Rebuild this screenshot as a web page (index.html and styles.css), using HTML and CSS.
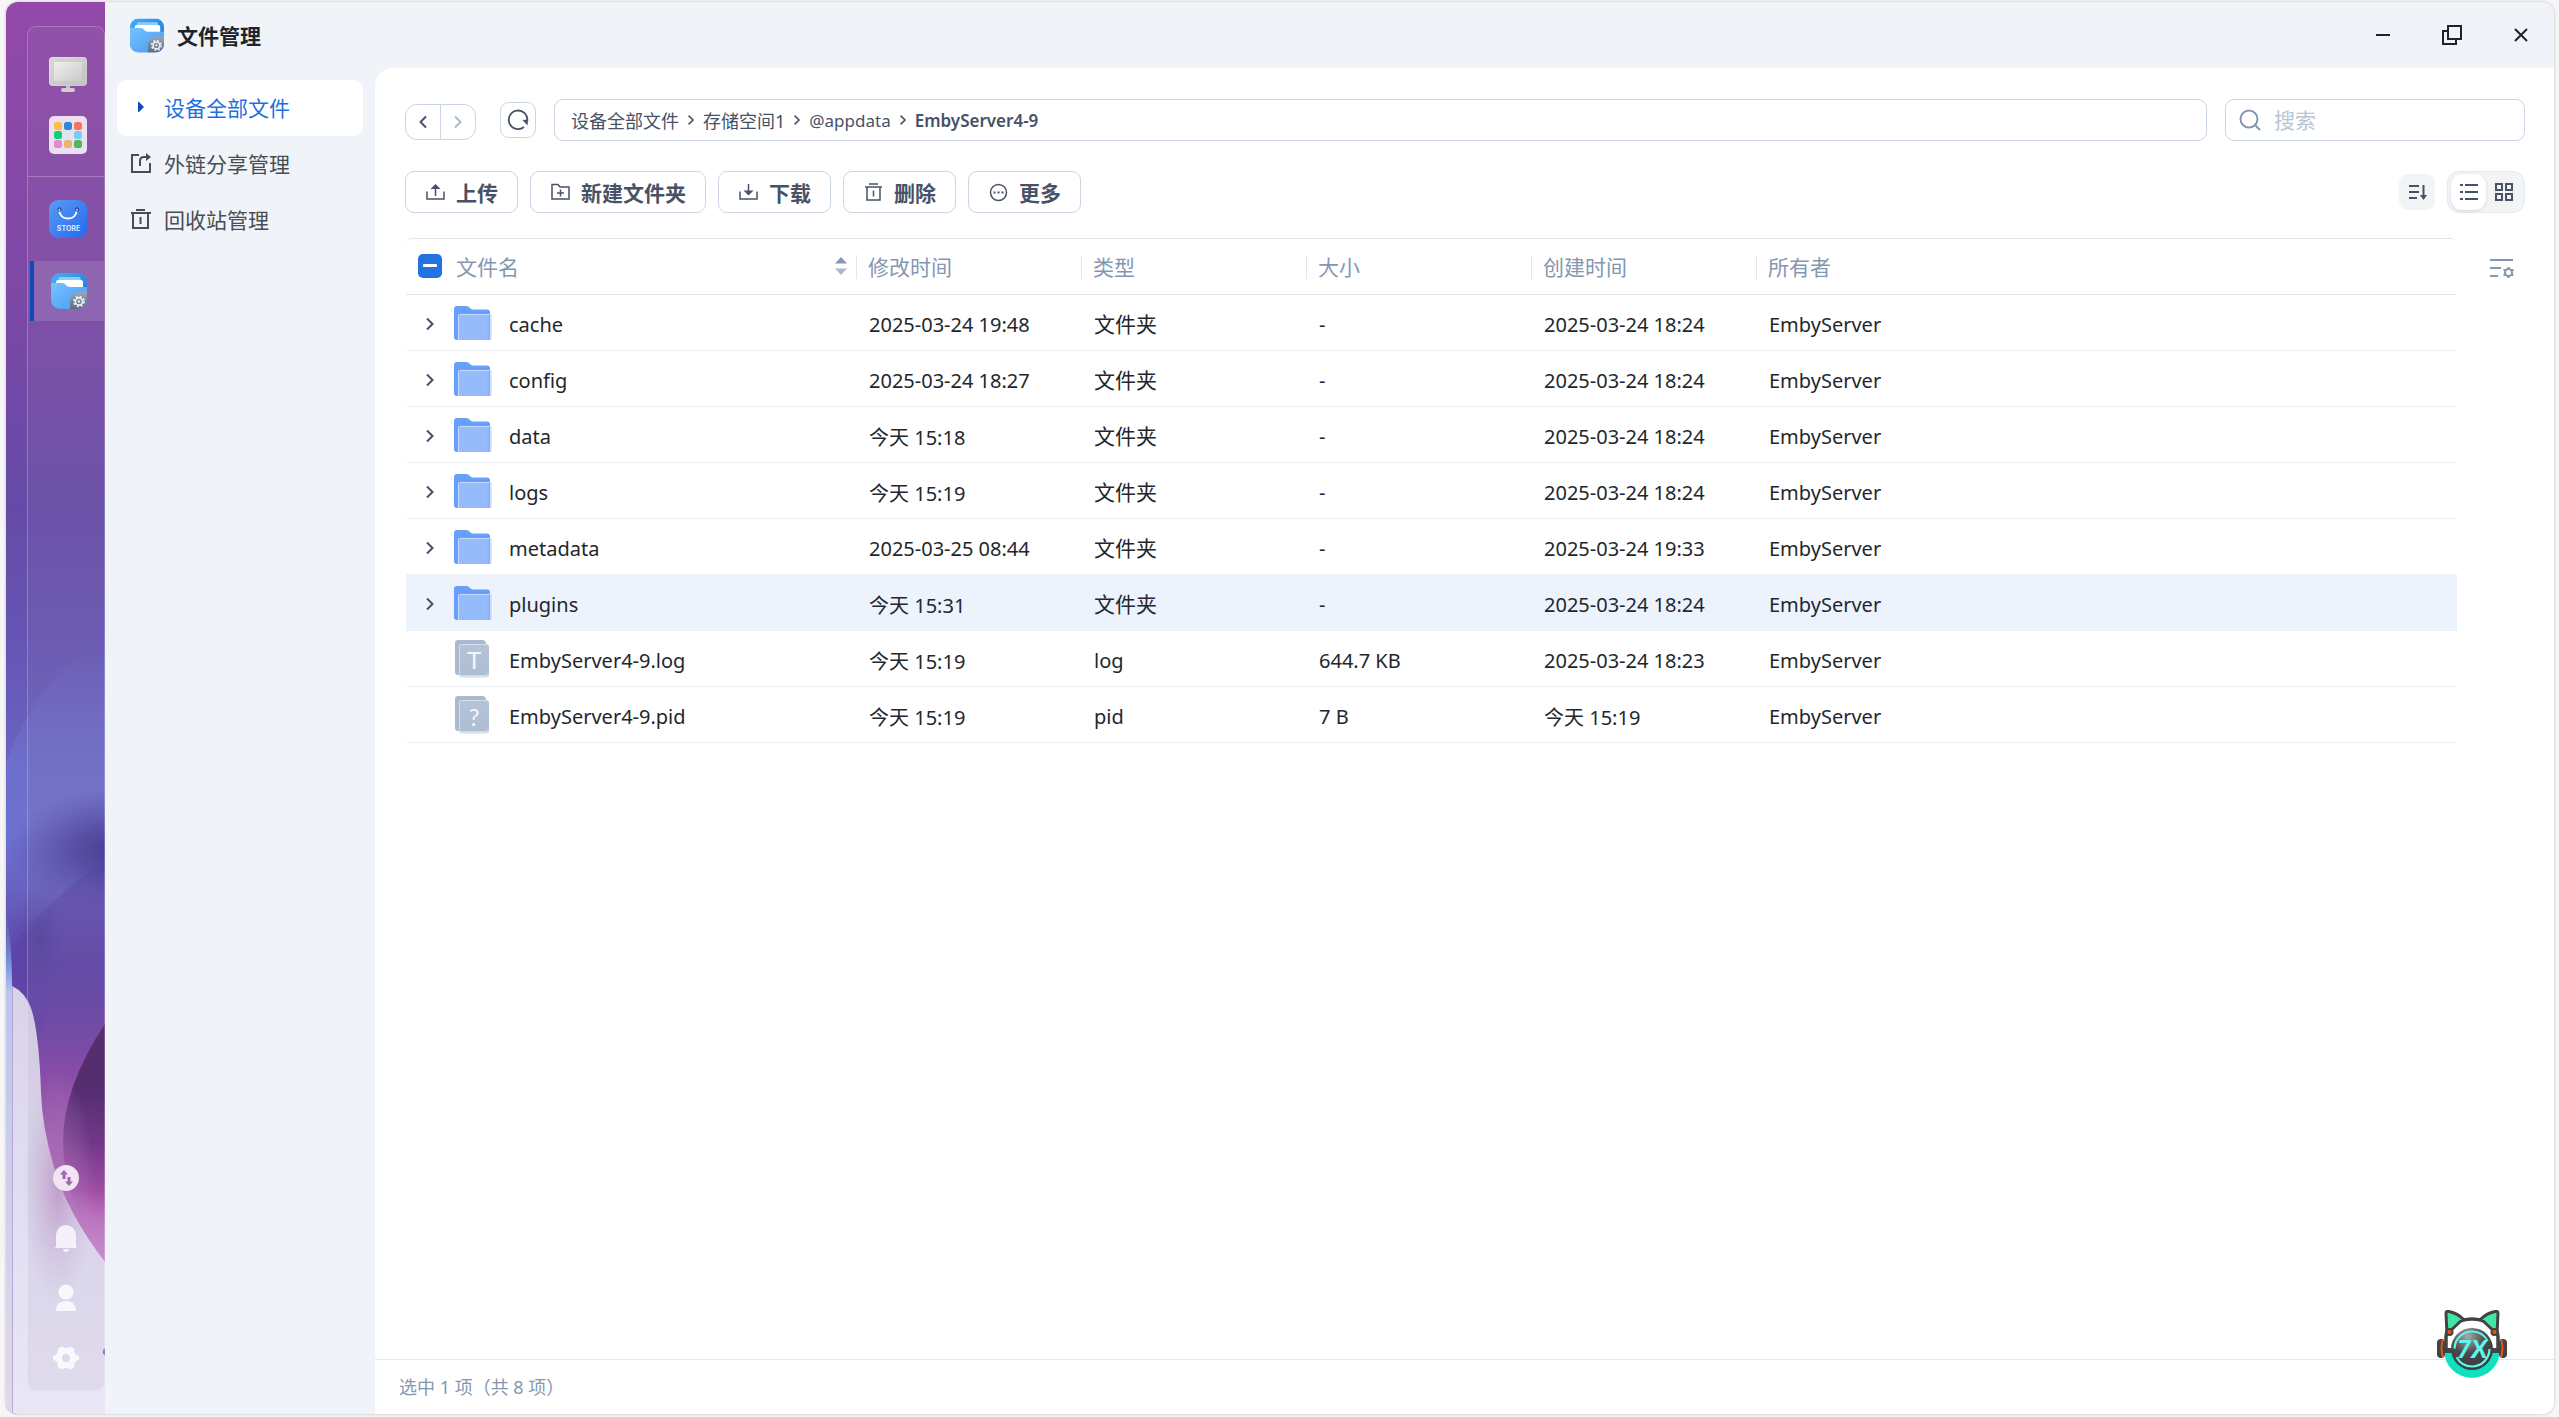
FILE: index.html
```html
<!DOCTYPE html>
<html lang="zh-CN">
<head>
<meta charset="utf-8">
<title>文件管理</title>
<link rel="stylesheet" href="styles.css">
</head>
<body>
<svg class="defs" aria-hidden="true">
  <defs>
    <linearGradient id="appBack" x1="0" y1="0" x2="1" y2="1"><stop offset="0" stop-color="#45b0fb"/><stop offset="1" stop-color="#1c6fd0"/></linearGradient>
    <linearGradient id="appFront" x1="0" y1="0" x2="1" y2="1"><stop offset="0" stop-color="#74c3ff"/><stop offset="1" stop-color="#4a98f2"/></linearGradient>
    <linearGradient id="appCorner" x1="0" y1="0" x2="0" y2="1"><stop offset="0" stop-color="#9aa5b8"/><stop offset="1" stop-color="#5d6b80"/></linearGradient>
    <linearGradient id="folderFront" x1="0" y1="0" x2="1" y2="0"><stop offset="0" stop-color="#96bbfb"/><stop offset=".84" stop-color="#96bbfb"/><stop offset="1" stop-color="#96bbfb" stop-opacity=".25"/></linearGradient>
    <linearGradient id="docFade" x1="0" y1="0" x2="0" y2="1"><stop offset="0" stop-color="#b4c3d7"/><stop offset=".84" stop-color="#afbed2"/><stop offset="1" stop-color="#afbed2" stop-opacity=".2"/></linearGradient>
    <clipPath id="appClip"><rect width="36" height="36" rx="9"/></clipPath>
  </defs>
  <symbol id="i-app" viewBox="0 0 36 36">
    <g clip-path="url(#appClip)">
      <rect width="36" height="36" fill="url(#appBack)"/>
      <path d="M8 4h21l2 8H6z" fill="#8accfb"/>
      <path d="M5 9q0-2 2-2h23q2 0 2 2v10H5z" fill="#fff"/>
      <path d="M0 10h11q2 0 3 1l2 2q1 1 3 1h17v22H0z" fill="url(#appFront)"/>
      <path d="M36 19v17H19V29q0-10 10-10z" fill="url(#appCorner)"/>
    </g>
    <circle cx="28" cy="28.500" r="3.600" fill="none" stroke="#eef1f5" stroke-width="1.600"/>
    <circle cx="28" cy="28.500" r="5" fill="none" stroke="#eef1f5" stroke-width="1.800" stroke-dasharray="2 1.930"/>
    <circle cx="28" cy="28.500" r="1.200" fill="#eef1f5"/>
  </symbol>
  <symbol id="i-folder" viewBox="0 0 38 34">
    <path d="M0 3q0-3 3-3h9q1.500 0 2.500.8L18 3.500h15q3 0 3 3V34H3q-3 0-3-3z" fill="#67a0fa"/>
    <rect x="4" y="8" width="34" height="26" rx="1.500" fill="url(#folderFront)"/>
    <path d="M4.500 34V9.500q0-1 1-1H36" fill="none" stroke="#c4daff"/>
  </symbol>
  <symbol id="i-doc" viewBox="0 0 38 40">
    <path d="M1 4q0-3 3-3h24q4 0 4 4v31H4q-3 0-3-3z" fill="#a9bad0"/>
    <rect x="5" y="5" width="30" height="34" rx="3" fill="url(#docFade)"/>
    <path d="M5.500 36V7q0-1.500 1.500-1.500h25.500q2 0 2 2" fill="none" stroke="#d3dde9"/>
  </symbol>
  <symbol id="i-chev" viewBox="0 0 10 14"><path d="M2 1.500 7.500 7 2 12.500" fill="none" stroke="currentColor" stroke-width="2"/></symbol>
</svg>

<div class="desktop">
  <aside class="wall">
    <svg class="paper" viewBox="0 0 99 1412" preserveAspectRatio="none" aria-hidden="true">
      <defs>
        <linearGradient id="sky" x1="0" y1="0" x2="0" y2="1">
          <stop offset="0" stop-color="#9349a9"/><stop offset=".21" stop-color="#7c48a6"/><stop offset=".36" stop-color="#654ba8"/><stop offset=".46" stop-color="#6656b4"/><stop offset=".55" stop-color="#6b66c4"/><stop offset=".6" stop-color="#6258b8"/><stop offset=".68" stop-color="#5e44a6"/><stop offset="1" stop-color="#7c3b9c"/>
        </linearGradient>
        <linearGradient id="glow" x1="0" y1="0" x2="0" y2="1"><stop offset="0" stop-color="#6e72ce" stop-opacity="0"/><stop offset=".6" stop-color="#6e72ce"/><stop offset="1" stop-color="#6e72ce" stop-opacity="0"/></linearGradient>
        <radialGradient id="dusk"><stop offset="0" stop-color="#3a3088"/><stop offset=".4" stop-color="#463a98" stop-opacity=".75"/><stop offset="1" stop-color="#5448a8" stop-opacity="0"/></radialGradient>
        <linearGradient id="petal" gradientUnits="userSpaceOnUse" x1="0" y1="980" x2="0" y2="1262"><stop offset="0" stop-color="#6a3fa4" stop-opacity="0"/><stop offset=".35" stop-color="#8b46a8"/><stop offset=".75" stop-color="#b464b8"/><stop offset="1" stop-color="#cf8fd3"/></linearGradient>
        <linearGradient id="deep" gradientUnits="userSpaceOnUse" x1="99" y1="1090" x2="74" y2="1220"><stop offset="0" stop-color="#4c2168"/><stop offset=".4" stop-color="#6e2c86"/><stop offset=".75" stop-color="#a046a4"/><stop offset="1" stop-color="#c06abf" stop-opacity="0"/></linearGradient>
        <linearGradient id="mist" x1="0" y1="0" x2="0" y2="1"><stop offset="0" stop-color="#d9d3ea"/><stop offset=".6" stop-color="#e3e0f3"/><stop offset="1" stop-color="#e9e7f5"/></linearGradient>
        <linearGradient id="edge" x1="0" y1="0" x2="0" y2="1"><stop offset="0" stop-color="#6a86d6" stop-opacity="0"/><stop offset=".11" stop-color="#7c9ce2"/><stop offset=".16" stop-color="#b9c6ef"/><stop offset=".6" stop-color="#d3d0ea"/><stop offset="1" stop-color="#e2d9e8"/></linearGradient>
        <radialGradient id="blush"><stop offset="0" stop-color="#b068b4" stop-opacity=".75"/><stop offset="1" stop-color="#b9a0cc" stop-opacity="0"/></radialGradient>
      </defs>
      <rect width="99" height="1412" fill="url(#sky)"/>
      <path d="M0 760Q40 660 99 640V860Q50 890 0 950z" fill="url(#glow)"/>
      <ellipse cx="112" cy="848" rx="110" ry="62" fill="url(#dusk)"/>
      <ellipse cx="34" cy="938" rx="30" ry="60" fill="url(#dusk)" opacity=".35"/>
      <path d="M99 900Q45 980 32 1040V1262H99z" fill="url(#petal)"/>
      <path d="M99 1022Q57 1085 57 1140T99 1262z" fill="url(#deep)"/>
      <path d="M6 984Q19 990 25 1006 33 1030 35 1090 36 1125 48 1165 62 1212 99 1260V1412H0V984z" fill="url(#mist)"/>
      <ellipse cx="52" cy="1185" rx="36" ry="115" fill="url(#blush)" opacity=".7"/>
      <path d="M0 910Q6 940 6 985V1412H0z" fill="url(#edge)"/>
      <path d="M6.500 985V1412" stroke="#b6a7d4" stroke-width="1"/>
      <circle cx="101" cy="1350" r="4" fill="#6e5fb5"/>
    </svg>
    <nav class="dock" aria-label="应用栏">
      <button class="dock-item" aria-label="桌面">
        <svg width="38" height="36" viewBox="0 0 38 36"><defs><linearGradient id="scr" x1="0" y1="0" x2="1" y2="1"><stop offset="0" stop-color="#efefef"/><stop offset="1" stop-color="#c9c9c9"/></linearGradient></defs><rect y="0" width="38" height="29" rx="4" fill="url(#scr)"/><rect x="0.500" y=".5" width="37" height="28" rx="3.500" fill="#bbb" opacity=".45"/><rect x="5" y="5" width="28" height="19" rx="1" fill="url(#scr)"/><path d="M17 29h4v3h-4z" fill="#c5c5c5"/><rect x="12" y="31" width="14" height="4" rx="2" fill="#cfcfcf"/></svg>
      </button>
      <button class="dock-item" aria-label="全部应用">
        <svg width="38" height="38" viewBox="0 0 38 38"><rect width="38" height="38" rx="5" fill="#eae0f1"/><g><rect x="5" y="6" width="8" height="8" rx="2.500" fill="#fdbb4a"/><rect x="15" y="6" width="8" height="8" rx="2.500" fill="#3088dd"/><rect x="25" y="6" width="8" height="8" rx="2.500" fill="#f6745c"/><rect x="5" y="15" width="8" height="8" rx="2.500" fill="#10cf78"/><rect x="15" y="15" width="8" height="8" rx="2.500" fill="#dfe5f5"/><rect x="25" y="15" width="8" height="8" rx="2.500" fill="#7accf9"/><rect x="5" y="24" width="8" height="8" rx="2.500" fill="#e48ccb"/><rect x="15" y="24" width="8" height="8" rx="2.500" fill="#eab568"/><rect x="25" y="24" width="8" height="8" rx="2.500" fill="#4fb95a"/></g></svg>
      </button>
      <hr class="dock-line">
      <button class="dock-item" aria-label="应用商店">
        <svg width="38" height="38" viewBox="0 0 38 38"><defs><linearGradient id="store" x1="0" y1="0" x2="1" y2="1"><stop offset="0" stop-color="#5a9cf3"/><stop offset="1" stop-color="#2468f0"/></linearGradient></defs><rect width="38" height="38" rx="9" fill="url(#store)"/><path d="M10 9.500q1 9 9 9t9-9" fill="none" stroke="#fff" stroke-width="1.800"/><circle cx="10.500" cy="9.500" r="1.700" fill="none" stroke="#1d3f86"/><circle cx="28" cy="9.500" r="1.700" fill="none" stroke="#1d3f86"/><text x="19.500" y="31" class="store-word">STORE</text></svg>
      </button>
      <button class="dock-item is-active" aria-label="文件管理"><svg width="36" height="36"><use href="#i-app"/></svg></button>
      <div class="dock-end">
        <button class="dock-item" aria-label="传输"><svg width="26" height="26" viewBox="0 0 26 26"><circle cx="13" cy="13" r="13" fill="#f1e4f3"/><path d="M7 9.500 11 5l4 4.500h-2.500V14h-3V9.500zM12 16.500h2.500V12h3v4.500H20L16 21z" fill="#a862b4"/></svg></button>
        <button class="dock-item" aria-label="通知"><svg width="26" height="30" viewBox="0 0 26 30"><path d="M3 24V12a10 10 0 0 1 20 0v12h1v1H2v-1zM10 26h6a3 3 0 0 1-6 0z" fill="#f5f1f9"/></svg></button>
        <button class="dock-item" aria-label="用户"><svg width="26" height="28" viewBox="0 0 26 28"><circle cx="13" cy="8" r="7.600" fill="#f8f7fc"/><path d="M3 27q0-10 10-10t10 10z" fill="#f8f7fc"/></svg></button>
        <button class="dock-item" aria-label="设置"><svg width="26" height="26" viewBox="0 0 26 26"><path fill-rule="evenodd" d="M5 3.500 9 1.500 11.500 3h3L17 1.500l4 2 .5 4L23 10l3 1v4l-3 1-1.500 2.500-.5 4-4 2-2.500-1.500h-3L9 24.500l-4-2-.5-4L3 16l-3-1v-4l3-1 1.500-2.500zM13 9a4 4 0 1 0 0 8 4 4 0 0 0 0-8z" fill="#f8f8fd"/></svg></button>
      </div>
    </nav>
  </aside>

  <div class="window">
    <header class="titlebar">
      <svg class="app-icon" width="34" height="35"><use href="#i-app"/></svg>
      <h1>文件管理</h1>
      <div class="win-btns">
        <button aria-label="最小化"><svg width="22" height="22" viewBox="0 0 22 22"><path d="M4 11h14" stroke="#1f242b" stroke-width="2"/></svg></button>
        <button aria-label="还原"><svg width="22" height="22" viewBox="0 0 22 22" fill="none" stroke="#1f242b" stroke-width="2"><rect x="7" y="2" width="13" height="13"/><path d="M7 7H2v13h13v-5"/></svg></button>
        <button aria-label="关闭"><svg width="22" height="22" viewBox="0 0 22 22"><path d="m5 5 12 12M17 5 5 17" stroke="#1f242b" stroke-width="2"/></svg></button>
      </div>
    </header>

    <div class="body">
      <nav class="side" aria-label="位置">
        <a href="#" class="side-link is-current"><svg width="22" height="22" viewBox="0 0 22 22"><path d="M8 6.500q0-1 1-.5l5 5-5 5q-1 .5-1-.5z" fill="#0d4bb5"/></svg>设备全部文件</a>
        <a href="#" class="side-link"><svg width="22" height="22" viewBox="0 0 22 22" fill="none" stroke="#494e55" stroke-width="2"><path d="M9 3H2v17h18v-9M10 14V9q0-4 4-4h3"/><path d="M16 1v8l5-4z" fill="#494e55" stroke="none"/></svg>外链分享管理</a>
        <a href="#" class="side-link"><svg width="22" height="22" viewBox="0 0 22 22" fill="none" stroke="#494e55" stroke-width="2"><path d="M6 2h9M1 5h20M3 5v15h15V5M10.500 9v7"/></svg>回收站管理</a>
      </nav>

      <main class="main">
        <div class="pathbar">
          <div class="history">
            <button aria-label="后退"><svg class="flip" width="10" height="14"><use href="#i-chev"/></svg></button>
            <button aria-label="前进" class="is-off"><svg width="10" height="14"><use href="#i-chev"/></svg></button>
          </div>
          <button class="refresh" aria-label="刷新"><svg width="22" height="22" viewBox="0 0 22 22"><path d="M17 18A9.300 9.300 0 1 1 20.300 12" fill="none" stroke="currentColor" stroke-width="1.800"/><path d="m15.500 11 5.500-.5-.5 6z" fill="currentColor"/></svg></button>
          <nav class="crumbs" aria-label="路径">
            <a href="#">设备全部文件</a><svg width="8" height="12"><use href="#i-chev"/></svg>
            <a href="#">存储空间1</a><svg width="8" height="12"><use href="#i-chev"/></svg>
            <a href="#" class="latin">@appdata</a><svg width="8" height="12"><use href="#i-chev"/></svg>
            <a href="#" class="here">EmbyServer4-9</a>
          </nav>
          <label class="search">
            <svg width="22" height="22" viewBox="0 0 22 22" fill="none" stroke="#8497b2" stroke-width="2"><circle cx="10" cy="10" r="8.500"/><path d="m16 16 5 5"/></svg>
            <input type="text" placeholder="搜索" aria-label="搜索">
          </label>
        </div>

        <div class="actions">
          <button class="act"><svg width="21" height="21" viewBox="0 0 21 21" fill="none" stroke="currentColor" stroke-width="1.500"><path d="M2 9.500V17h17V9.500M10.500 14V5"/><path d="m5.500 7 5-5 5 5z" fill="currentColor" stroke="none"/></svg>上传</button>
          <button class="act"><svg width="21" height="21" viewBox="0 0 21 21" fill="none" stroke="currentColor" stroke-width="1.500"><path d="M2 2.500h6l2 2.500h9v12H2zM10.500 7.500v7M7 11h7"/></svg>新建文件夹</button>
          <button class="act"><svg width="21" height="21" viewBox="0 0 21 21" fill="none" stroke="currentColor" stroke-width="1.500"><path d="M2 9.500V17h17V9.500M10.500 2v8"/><path d="m5.500 8.500 5 5 5-5z" fill="currentColor" stroke="none"/></svg>下载</button>
          <button class="act"><svg width="21" height="21" viewBox="0 0 21 21" fill="none" stroke="currentColor" stroke-width="1.500"><path d="M6 2h9M2 5h17M4 5v13h13V5M10.500 8.500v6"/></svg>删除</button>
          <button class="act"><svg width="21" height="21" viewBox="0 0 21 21" fill="none" stroke="currentColor" stroke-width="1.500"><circle cx="10.500" cy="10.500" r="8"/><path d="M5.500 10.500h2M9.500 10.500h2M13.500 10.500h2" stroke-width="2"/></svg>更多</button>
          <button class="sort" aria-label="排序"><svg width="20" height="20" viewBox="0 0 20 20" fill="none" stroke="currentColor" stroke-width="2"><path d="M2 4h10M2 10h10M2 16h8M16.500 3v10"/><path d="M13 13h7l-3.500 5z" fill="currentColor" stroke="none"/></svg></button>
          <div class="views">
            <button class="is-on" aria-label="列表"><svg width="20" height="20" viewBox="0 0 20 20" fill="none" stroke="currentColor" stroke-width="2"><path d="M1 3h3M6 3h13M1 10h3M6 10h13M1 17h3M6 17h13"/></svg></button>
            <button aria-label="网格"><svg width="20" height="20" viewBox="0 0 20 20" fill="none" stroke="currentColor" stroke-width="2"><path d="M2 2h6v6H2zM12 2h6v6h-6zM2 12h6v6H2zM12 12h6v6h-6z"/></svg></button>
          </div>
        </div>

        <div class="listing">
          <table>
            <colgroup><col class="c-name"><col class="c-col"><col class="c-col"><col class="c-col"><col class="c-col"><col></colgroup>
            <thead>
              <tr>
                <th scope="col"><div class="name-head"><input type="checkbox" id="all" checked><label for="all">文件名</label>
                  <button aria-label="按文件名排序"><svg width="12" height="20" viewBox="0 0 12 20"><path d="M0 7.500 6 1l6 6.500z" fill="#8497b2"/><path d="M0 12.500h12L6 19z" fill="#a9bad0"/></svg></button></div></th>
                <th scope="col">修改时间</th><th scope="col">类型</th><th scope="col">大小</th><th scope="col">创建时间</th><th scope="col">所有者</th>
              </tr>
            </thead>
            <tbody>
              <tr><td><div class="name"><button aria-label="展开"><svg width="10" height="14"><use href="#i-chev"/></svg></button><svg class="fold" width="38" height="34"><use href="#i-folder"/></svg>cache</div></td><td>2025-03-24 19:48</td><td class="kind">文件夹</td><td>-</td><td>2025-03-24 18:24</td><td>EmbyServer</td></tr>
              <tr><td><div class="name"><button aria-label="展开"><svg width="10" height="14"><use href="#i-chev"/></svg></button><svg class="fold" width="38" height="34"><use href="#i-folder"/></svg>config</div></td><td>2025-03-24 18:27</td><td class="kind">文件夹</td><td>-</td><td>2025-03-24 18:24</td><td>EmbyServer</td></tr>
              <tr><td><div class="name"><button aria-label="展开"><svg width="10" height="14"><use href="#i-chev"/></svg></button><svg class="fold" width="38" height="34"><use href="#i-folder"/></svg>data</div></td><td>今天 15:18</td><td class="kind">文件夹</td><td>-</td><td>2025-03-24 18:24</td><td>EmbyServer</td></tr>
              <tr><td><div class="name"><button aria-label="展开"><svg width="10" height="14"><use href="#i-chev"/></svg></button><svg class="fold" width="38" height="34"><use href="#i-folder"/></svg>logs</div></td><td>今天 15:19</td><td class="kind">文件夹</td><td>-</td><td>2025-03-24 18:24</td><td>EmbyServer</td></tr>
              <tr><td><div class="name"><button aria-label="展开"><svg width="10" height="14"><use href="#i-chev"/></svg></button><svg class="fold" width="38" height="34"><use href="#i-folder"/></svg>metadata</div></td><td>2025-03-25 08:44</td><td class="kind">文件夹</td><td>-</td><td>2025-03-24 19:33</td><td>EmbyServer</td></tr>
              <tr class="is-picked"><td><div class="name"><button aria-label="展开"><svg width="10" height="14"><use href="#i-chev"/></svg></button><svg class="fold" width="38" height="34"><use href="#i-folder"/></svg>plugins</div></td><td>今天 15:31</td><td class="kind">文件夹</td><td>-</td><td>2025-03-24 18:24</td><td>EmbyServer</td></tr>
              <tr><td><div class="name file"><svg class="fold" width="38" height="40"><use href="#i-doc"/><text x="20" y="30" class="mark">T</text></svg>EmbyServer4-9.log</div></td><td>今天 15:19</td><td>log</td><td>644.7 KB</td><td>2025-03-24 18:23</td><td>EmbyServer</td></tr>
              <tr><td><div class="name file"><svg class="fold" width="38" height="40"><use href="#i-doc"/><text x="20" y="31" class="mark">?</text></svg>EmbyServer4-9.pid</div></td><td>今天 15:19</td><td>pid</td><td>7 B</td><td>今天 15:19</td><td>EmbyServer</td></tr>
            </tbody>
          </table>
          <button class="columns" aria-label="列设置"><svg width="26" height="22" viewBox="0 0 26 22" fill="none" stroke="#8497b2" stroke-width="2"><path d="M1 3h23M1 11h11M1 19h8"/><path d="M19.500 10v11M14.500 12.500l10 6M24.500 12.500l-10 6" stroke-width="2"/><circle cx="19.500" cy="15.500" r="3.500" fill="#fff" stroke-width="2"/></svg></button>
        </div>

        <footer class="status">选中 1 项（共 8 项）</footer>
      </main>
    </div>

    <button class="mascot" aria-label="助手">
      <svg width="72" height="70" viewBox="0 0 72 70">
        <defs><radialGradient id="face" cx=".4" cy=".2" r=".8"><stop offset="0" stop-color="#a8a8a8"/><stop offset=".5" stop-color="#4a4a4c"/><stop offset="1" stop-color="#3a3a3c"/></radialGradient></defs>
        <path d="M8 40a28 28 0 0 0 56 0z" fill="#0fe0c0"/>
        <path d="M10 40V27Q10 20 16 15 25 9 36 9t20 6q6 5 6 12v13z" fill="#fff" stroke="#434345" stroke-width="3.500"/>
        <path d="M11 24 10 3q0-2 3-1.500 9 2 14 7.500zM61 24 62 3q0-2-3-1.500-9 2-14 7.500z" fill="#3fe6a4" stroke="#434345" stroke-width="3"/>
        <path d="M9 38h54v5H9z" fill="#434345"/>
        <rect x="1" y="29" width="8" height="19" rx="4" fill="#434345"/><rect x="63" y="29" width="8" height="19" rx="4" fill="#434345"/>
        <path d="M7 29q-3 9 0 18M65 29q3 9 0 18" fill="none" stroke="#f1560c" stroke-width="1.800"/>
        <circle cx="13.500" cy="22" r="3" fill="#f1560c" stroke="#434345" stroke-width="2"/><circle cx="58.500" cy="22" r="3" fill="#f1560c" stroke="#434345" stroke-width="2"/>
        <circle cx="36" cy="39" r="21" fill="url(#face)"/>
        <circle cx="36" cy="39" r="17.500" fill="none" stroke="#5ff5ec" stroke-width="2.200" stroke-dasharray="46 9"/>
        <text x="36" y="48" class="mascot-word">7X</text>
      </svg>
    </button>
  </div>
</div>
<script src="app.js"></script>
</body>
</html>
```
FILE: app.js
```js
// Only part of the rows are selected, so the header box shows a dash.
document.getElementById('all').indeterminate = true;
```
FILE: styles.css
```css
* { box-sizing: border-box; }

body {
  margin: 0;
  background: #f6f6f6;
  color: #23272d;
  font-family: "Noto Sans", "Noto Sans CJK SC", sans-serif;
  font-size: 20px;
}

button {
  display: flex;
  align-items: center;
  justify-content: center;
  padding: 0;
  border: 0;
  background: none;
  color: inherit;
  font: inherit;
  cursor: pointer;
}

a { color: inherit; text-decoration: none; }
svg { flex: none; display: block; }
.defs { position: absolute; width: 0; height: 0; }

.desktop {
  display: flex;
  height: calc(100vh - 5px);
  margin: 2px 5px 3px 6px;
  border-radius: 12px;
  overflow: hidden;
  box-shadow: 0 0 3px rgba(0, 0, 0, .25);
}

/* Wallpaper strip and dock */
.wall {
  position: relative;
  display: flex;
  flex: none;
  width: 99px;
  padding: 24px 0 23px 21px;
}
.paper {
  position: absolute;
  inset: 0;
  width: 100%;
  height: 100%;
}
.dock {
  position: relative;
  display: flex;
  flex: 1;
  flex-direction: column;
  padding: 18px 0 2px;
  border: 1px solid rgba(255, 255, 255, .22);
  border-radius: 9px;
  background: rgba(160, 140, 175, .12);
}
.dock-item { flex: none; height: 60px; padding-left: 4px; }
.dock-item.is-active {
  margin: 12px 0 0 2px;
  padding: 0;
  border-left: 4px solid #0d4bb5;
  background: rgba(255, 255, 255, .12);
}
.dock-line {
  width: 100%;
  margin: 11px 0 12px;
  border: 0;
  border-top: 1px solid rgba(255, 255, 255, .25);
}
.dock-end { margin-top: auto; }
.dock-end .dock-item { width: 100%; padding: 0; }
.store-word {
  fill: #d8e6ff;
  font: 700 7px "Inter", sans-serif;
  text-anchor: middle;
}

/* Application window */
.window {
  position: relative;
  display: flex;
  flex: 1;
  flex-direction: column;
  min-width: 0;
  background: #f0f4f9;
}
.titlebar {
  display: flex;
  flex: none;
  align-items: center;
  height: 66px;
  padding: 0 4px 0 25px;
}
.titlebar h1 {
  margin: 0 0 0 13px;
  padding-top: 2px;
  color: #1f242b;
  font-size: 21px;
  line-height: 32px;
}
.win-btns { display: flex; margin-left: auto; }
.win-btns button { width: 69px; height: 48px; }
.win-btns button:last-child { width: 58px; margin-left: 6px; }

.body { display: flex; flex: 1; min-height: 0; }
.side { flex: none; width: 270px; padding: 12px 12px 0; }
.side-link {
  display: flex;
  align-items: center;
  gap: 12px;
  height: 56px;
  padding: 0 0 2px 13px;
  border-radius: 9px;
  color: #494e55;
  font-size: 21px;
}
.side-link.is-current { background: #fff; color: #1f70e0; }

.main {
  display: flex;
  flex: 1;
  flex-direction: column;
  min-width: 0;
  padding-top: 31px;
  border-top-left-radius: 18px;
  background: #fff;
  color: #475266;
}

/* Path bar */
.pathbar { display: flex; align-items: center; padding: 0 29px 0 30px; }
.history {
  display: flex;
  width: 71px;
  height: 36px;
  margin-top: 4px;
  border: 1px solid #c9d5e2;
  border-radius: 12px;
}
.history button { flex: 1; }
.history button + button { border-left: 1px solid #c9d5e2; }
.history .is-off { color: #a9bad0; }
.flip { transform: scaleX(-1); }
.refresh {
  width: 36px;
  height: 36px;
  margin: 0 18px 0 24px;
  border: 1px solid #c9d5e2;
  border-radius: 9px;
}
.crumbs {
  display: flex;
  flex: 1;
  align-items: center;
  gap: 8px;
  height: 42px;
  padding-left: 16px;
  border: 1px solid #c9d5e2;
  border-radius: 9px;
  font-size: 18px;
}
.crumbs .latin { font-size: 17px; }
.crumbs .here { font-size: 17px; font-weight: 600; }
.search {
  display: flex;
  align-items: center;
  gap: 13px;
  width: 300px;
  height: 42px;
  margin-left: 18px;
  padding: 0 13px;
  border: 1px solid #c9d5e2;
  border-radius: 9px;
}
.search input {
  flex: 1;
  min-width: 0;
  padding: 0;
  border: 0;
  outline: 0;
  background: none;
  font: 400 21px "Noto Sans", "Noto Sans CJK SC", sans-serif;
}
.search input::placeholder { color: #b9c5d5; opacity: 1; }

/* Toolbar */
.actions {
  display: flex;
  align-items: center;
  gap: 12px;
  padding: 30px 29px 25px 30px;
}
.act {
  gap: 10px;
  height: 42px;
  padding: 0 19px;
  border: 1px solid #c9d5e2;
  border-radius: 9px;
  font-size: 21px;
  font-weight: 700;
}
.sort {
  width: 36px;
  height: 36px;
  margin-left: auto;
  border-radius: 9px;
  background: #f2f4f6;
}
.views {
  display: flex;
  align-items: center;
  width: 78px;
  height: 42px;
  padding: 0 3px;
  border: 1px solid #e6e9ee;
  border-radius: 12px;
  background: #f2f4f6;
}
.views button { width: 36px; height: 36px; border-radius: 11px; }
.views .is-on { background: #fff; box-shadow: 0 1px 3px rgba(0, 0, 0, .12); }

/* File table */
.listing {
  display: flex;
  flex: 1;
  align-items: flex-start;
  min-height: 0;
  padding: 0 25px 0 31px;
}
table {
  flex: 1;
  min-width: 0;
  margin-right: 12px;
  border-collapse: separate;
  border-spacing: 0;
  table-layout: fixed;
}
.c-name { width: 450px; }
.c-col { width: 225px; }
th {
  height: 57px;
  padding: 0 0 2px 12px;
  border-top: 1px solid #dfe7ef;
  border-bottom: 1px solid #dfe7ef;
  background: linear-gradient(#dfe7ef, #dfe7ef) 0 50% / 1px 24px no-repeat;
  color: #8497b2;
  font-size: 21px;
  font-weight: 400;
  text-align: left;
}
th:first-child { border-top-left-radius: 6px; background: none; }
th:last-child { border-top-right-radius: 6px; }
.name-head { display: flex; align-items: center; gap: 14px; }
.name-head button { margin: 0 9px 0 auto; }
input[type="checkbox"] {
  display: grid;
  place-items: center;
  width: 24px;
  height: 24px;
  margin: 0;
  border-radius: 5px;
  background: #2273e1;
  appearance: none;
}
input[type="checkbox"]::after {
  content: "";
  width: 14px;
  height: 3px;
  border-radius: 1px;
  background: #fff;
}
td {
  height: 56px;
  padding: 4px 0 0 13px;
  border-bottom: 1px solid #eef1f5;
  color: #23272d;
}
td:first-child { padding-left: 12px; }
td.kind { padding-top: 1px; font-size: 21px; }
.name { display: flex; align-items: center; }
.name button { width: 24px; height: 24px; margin: -2px 12px 0 0; color: #475266; }
.name .fold { margin: -4px 17px 0 0; }
.name.file { padding-left: 36px; }
.mark {
  fill: #f4f7fa;
  font: 400 24px "Lato", sans-serif;
  text-anchor: middle;
}
.is-picked td { background: #ecf3fc; }
.columns { width: 60px; height: 60px; padding-left: 6px; }

.status {
  flex: none;
  height: 55px;
  padding-left: 24px;
  border-top: 1px solid #e3e7f0;
  color: #8497b2;
  font-size: 18px;
  line-height: 54px;
}

/* Floating helper */
.mascot { position: absolute; right: 46px; bottom: 34px; }
.mascot-word {
  fill: #5ff5ec;
  font: italic 900 25px "Lato", sans-serif;
  text-anchor: middle;
}
```
